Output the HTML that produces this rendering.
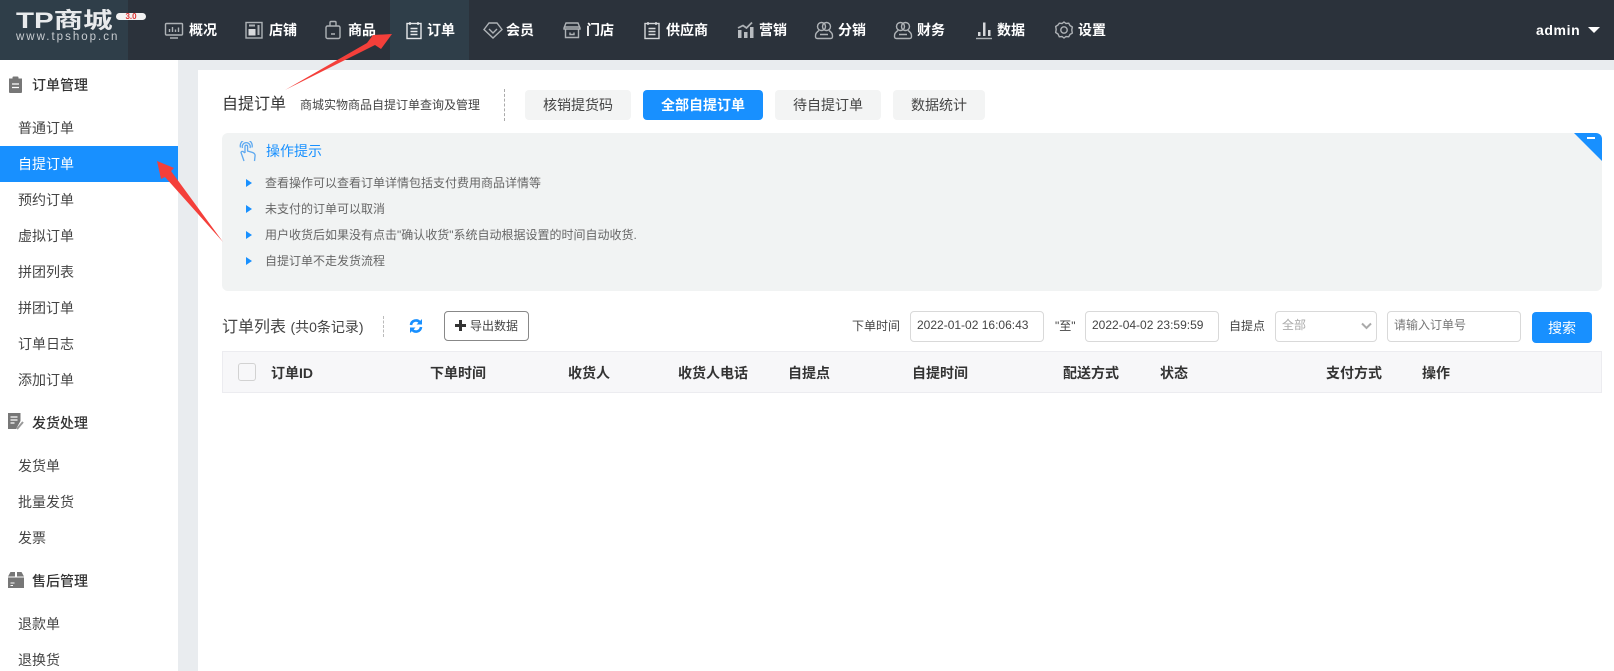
<!DOCTYPE html>
<html lang="zh-CN"><head><meta charset="utf-8"><title>自提订单</title>
<style>
*{box-sizing:border-box}
html,body{margin:0;padding:0;width:1614px;height:671px;overflow:hidden;background:#e9ecef;font-family:"Liberation Sans","Noto Sans CJK SC",sans-serif;color:#333}
.a{position:absolute;white-space:nowrap}
#hd{position:absolute;left:0;top:0;width:1614px;height:60px;background:#2b323b}
.nv{position:absolute;top:19px;height:22px;line-height:22px;font-size:14px;font-weight:700;color:#fff;white-space:nowrap}
.ic{position:absolute;top:20px;width:20px;height:20px;fill:none;stroke:#aeb2b6;stroke-width:1.4}
#sd{position:absolute;left:0;top:60px;width:178px;height:611px;background:#fff}
.si{position:absolute;left:18px;font-size:14px;line-height:20px;color:#444;white-space:nowrap}
.sg{position:absolute;left:32px;font-size:14px;line-height:20px;color:#333;font-weight:500;white-space:nowrap}
#mn{position:absolute;left:198px;top:70px;width:1416px;height:601px;background:#fff}
.tb{position:absolute;top:90px;height:30px;line-height:30px;text-align:center;font-size:14px;background:#f3f4f4;color:#444;border-radius:4px}
.tp{position:absolute;left:265px;font-size:12px;line-height:18px;color:#666;white-space:nowrap}
.tr{position:absolute;left:246px;width:0;height:0;border-left:6px solid #1890ff;border-top:4px solid transparent;border-bottom:4px solid transparent}
.ip{position:absolute;top:311px;height:31px;line-height:27px;border:1px solid #d9d9d9;border-radius:4px;background:#fff;font-size:12px;padding-left:6px;color:#444;white-space:nowrap}
.lb{position:absolute;top:317px;font-size:12px;line-height:18px;color:#444;white-space:nowrap}
.th{position:absolute;top:363px;font-size:14px;line-height:20px;font-weight:700;color:#333;white-space:nowrap}
</style></head><body>
<div id="hd"></div>
<div class="a" style="left:0;top:0;width:128px;height:60px;background:#2f3e49"></div>
<div class="a" style="left:16px;top:9px;font-size:22px;line-height:24px;font-weight:700;color:#e8eaec;transform:scaleX(1.34);transform-origin:0 0">TP商城</div>
<div class="a" style="left:16px;top:31px;font-size:11.5px;line-height:13px;color:#c9cdd1;font-weight:400;letter-spacing:2px">www.tpshop.cn</div>
<div class="a" style="left:116px;top:13px;width:30px;height:7px;border-radius:4px;background:#f2f2f2;color:#d33;font-size:8px;line-height:7px;text-align:center;font-weight:700">3.0</div>
<div class="a" style="left:390px;top:0;width:79px;height:60px;background:#2f3e49"></div>

<svg class="ic" style="left:164px" viewBox="0 0 20 20"><rect x="1.5" y="3.5" width="17" height="11.5" rx="1"/><path d="M6 18h8M5.5 12V9M8.500 12V7M11.500 12V9.500M14.500 12V7.500"/></svg>
<div class="nv" style="left:189px">概况</div>
<svg class="ic" style="left:244px" viewBox="0 0 20 20"><rect x="2" y="2.500" width="16" height="15.500"/><rect x="4.500" y="9" width="7" height="6.500" fill="#d8dadc" stroke="none"/><path d="M5 5.500h6M14.500 5v10" stroke-width="2"/></svg>
<div class="nv" style="left:269px">店铺</div>
<svg class="ic" style="left:323px" viewBox="0 0 20 20"><rect x="3" y="6" width="14" height="12.500" rx="1.500"/><path d="M7 6V2.500q0-1 1-1h4q1 0 1 1V6M8 14h4"/></svg>
<div class="nv" style="left:348px">商品</div>
<svg class="ic" style="left:404px;stroke:#e6e8ea" viewBox="0 0 20 20"><rect x="3" y="3.500" width="14" height="15"/><path d="M6 2v3M14 2v3M6.500 8.500h7M6.500 11.500h7M6.500 14.500h7" /></svg>
<div class="nv" style="left:427px">订单</div>
<svg class="ic" style="left:483px" viewBox="0 0 20 20"><path d="M6 3h8l5 6.500L10 18 1 9.500z"/><path d="M6 9l4 4 4-4"/></svg>
<div class="nv" style="left:506px">会员</div>
<svg class="ic" style="left:562px" viewBox="0 0 20 20"><path d="M4 3h12l2 5v1H2V8zM3.500 9v8.500h13V9"/><path d="M2.500 7h15M8 12.500v2h4v-2"/></svg>
<div class="nv" style="left:586px">门店</div>
<svg class="ic" style="left:642px;stroke:#d5d7da" viewBox="0 0 20 20"><rect x="3" y="3.500" width="14" height="15"/><path d="M6 2v3M14 2v3M6.500 8.500h7M6.500 11.500h7M6.500 14.500h7"/></svg>
<div class="nv" style="left:666px">供应商</div>
<svg class="ic" style="left:736px" viewBox="0 0 20 20"><path d="M2 10h3.500v8H2zM8 12h3.500v6H8zM14 7h3.500v11H14z" fill="#b8bcc0" stroke="none"/><path d="M2 8L7 5.500l3.500 2.500L16 2.500" stroke-width="1.800"/></svg>
<div class="nv" style="left:759px">营销</div>
<svg class="ic" style="left:814px" viewBox="0 0 20 20"><circle cx="7.500" cy="6.500" r="4"/><circle cx="12.500" cy="6.500" r="4"/><path d="M5 10.500C2.500 12 1.300 14 1.500 16.500q0 2 2 2h13q2 0 2-2c.2-2.500-1-4.500-3.500-6M6 14.500h8"/></svg>
<div class="nv" style="left:838px">分销</div>
<svg class="ic" style="left:893px" viewBox="0 0 20 20"><circle cx="7.500" cy="6.500" r="4"/><circle cx="12.500" cy="6.500" r="4"/><path d="M5 10.500C2.500 12 1.300 14 1.500 16.500q0 2 2 2h13q2 0 2-2c.2-2.500-1-4.500-3.500-6M6 14.500h8"/></svg>
<div class="nv" style="left:917px">财务</div>
<svg class="ic" style="left:974px" viewBox="0 0 20 20"><path d="M2 18.500h16" /><path d="M4 12h2.500v4H4zM9 2.500h2.500V16H9zM14 10h2.500v6H14z" fill="#d5d7da" stroke="none"/></svg>
<div class="nv" style="left:997px">数据</div>
<svg class="ic" style="left:1054px" viewBox="0 0 20 20"><path d="M10 2l2 1.500 2.700-.3 1.300 2.300 2.300 1.500-.5 3 .5 3-2.300 1.500-1.300 2.300-2.700-.3-2 1.500-2-1.500-2.700.3L4 14l-2.300-1.500.5-3-.5-3L4 5l1.300-1.800 2.700.3z"/><circle cx="10" cy="10" r="3.200"/></svg>
<div class="nv" style="left:1078px">设置</div>
<div class="a" style="left:1536px;top:19px;font-size:14px;line-height:22px;font-weight:700;color:#fff;letter-spacing:.6px">admin</div>
<div class="a" style="left:1588px;top:27px;border-top:6px solid #fff;border-left:6px solid transparent;border-right:6px solid transparent;width:0;height:0"></div>

<div id="sd"></div>
<svg class="a" style="left:8px;top:76px" width="15" height="17" viewBox="0 0 15 17"><path d="M1 2.500h13V16a1 1 0 0 1-1 1H2a1 1 0 0 1-1-1z" fill="#777"/><rect x="4.500" y="0.500" width="6" height="4" rx="1" fill="#777"/><path d="M4 8h7M4 11.500h7" stroke="#fff" stroke-width="1.200"/></svg>
<div class="sg" style="top:75px">订单管理</div>
<div class="si" style="top:118px">普通订单</div>
<div class="a" style="left:0;top:146px;width:178px;height:36px;background:#1890ff"></div>
<div class="si" style="top:154px;color:#fff">自提订单</div>
<div class="si" style="top:190px">预约订单</div>
<div class="si" style="top:226px">虚拟订单</div>
<div class="si" style="top:262px">拼团列表</div>
<div class="si" style="top:298px">拼团订单</div>
<div class="si" style="top:334px">订单日志</div>
<div class="si" style="top:370px">添加订单</div>
<svg class="a" style="left:8px;top:413px" width="16" height="17" viewBox="0 0 16 17"><path d="M0 0h12.500v8L8 16H0z" fill="#777"/><path d="M2.500 4h7M2.500 7h7M2.500 10h4" stroke="#fff" stroke-width="1.200"/><path d="M9 16l6-7" stroke="#999" stroke-width="2"/></svg>
<div class="sg" style="top:413px">发货处理</div>
<div class="si" style="top:456px">发货单</div>
<div class="si" style="top:492px">批量发货</div>
<div class="si" style="top:528px">发票</div>
<svg class="a" style="left:8px;top:572px" width="16" height="16" viewBox="0 0 16 16"><path d="M2.500 0h11L16 4.500H0z" fill="#777"/><rect x="0" y="5.500" width="16" height="10.500" fill="#777"/><path d="M7 0h2v4.500H7z" fill="#fff"/><path d="M2.500 11h4M2.500 13.500h2.500" stroke="#fff" stroke-width="1"/></svg>
<div class="sg" style="top:571px">售后管理</div>
<div class="si" style="top:614px">退款单</div>
<div class="si" style="top:650px">退换货</div>

<div id="mn"></div>
<div class="a" style="left:222px;top:93px;font-size:16px;line-height:24px;color:#333">自提订单</div>
<div class="a" style="left:300px;top:96px;font-size:12px;line-height:18px;color:#444">商城实物商品自提订单查询及管理</div>
<div class="a" style="left:504px;top:89px;width:0;height:32px;border-left:1px dashed #aaa"></div>
<div class="tb" style="left:525px;width:106px">核销提货码</div>
<div class="tb" style="left:643px;width:120px;background:#1890ff;color:#fff;font-weight:700">全部自提订单</div>
<div class="tb" style="left:775px;width:106px">待自提订单</div>
<div class="tb" style="left:893px;width:92px">数据统计</div>

<div class="a" style="left:222px;top:133px;width:1380px;height:158px;background:#f1f3f3;border-radius:6px;overflow:hidden"><div style="position:absolute;right:0;top:0;width:0;height:0;border-top:28px solid #1890ff;border-left:28px solid transparent"></div><div style="position:absolute;left:1365px;top:4px;width:8px;height:2px;background:#fff"></div></div>
<svg class="a" style="left:239px;top:141px" width="18" height="21" viewBox="0 0 18 21" fill="none" stroke="#5ea9f0" stroke-width="1.300"><path d="M6 12V5.500a1.300 1.300 0 0 1 2.600 0V10l5 1.500q2.500 1 2.500 3l-.6 5.500M6 12l-2-1.500q-1.500-.5-2 1l3 8.500"/><path d="M3.500 7a4 4 0 1 1 7.500 0M1.500 6.500a6 6 0 1 1 11.500 0"/></svg>
<div class="a" style="left:266px;top:141px;font-size:14px;line-height:20px;color:#1890ff">操作提示</div>
<div class="tr" style="top:179px"></div><div class="tp" style="top:174px">查看操作可以查看订单详情包括支付费用商品详情等</div>
<div class="tr" style="top:205px"></div><div class="tp" style="top:200px">未支付的订单可以取消</div>
<div class="tr" style="top:231px"></div><div class="tp" style="top:226px">用户收货后如果没有点击"确认收货"系统自动根据设置的时间自动收货.</div>
<div class="tr" style="top:257px"></div><div class="tp" style="top:252px">自提订单不走发货流程</div>

<div class="a" style="left:222px;top:315px;font-size:16px;line-height:24px;color:#444">订单列表 <span style="font-size:14px">(共0条记录)</span></div>
<div class="a" style="left:383px;top:316px;width:0;height:21px;border-left:1px dashed #bbb"></div>
<svg class="a" style="left:409px;top:319px" width="14" height="14" viewBox="0 0 14 14" fill="none" stroke="#1890ff" stroke-width="2.600"><path d="M2 6a5 5 0 0 1 9-2.500M12 8a5 5 0 0 1-9 2.500"/><path d="M13 0v5.500H7.500M1 14V8.500h5.500" fill="#1890ff" stroke="none"/></svg>
<div class="a" style="left:444px;top:311px;width:85px;height:30px;border:1px solid #888;border-radius:4px"></div>
<svg class="a" style="left:455px;top:320px" width="11" height="11" viewBox="0 0 11 11"><path d="M4 0h3v4h4v3H7v4H4V7H0V4h4z" fill="#333"/></svg>
<div class="a" style="left:470px;top:317px;font-size:12px;line-height:18px;color:#444">导出数据</div>

<div class="lb" style="left:852px">下单时间</div>
<div class="ip" style="left:910px;width:134px">2022-01-02 16:06:43</div>
<div class="lb" style="left:1055px">"至"</div>
<div class="ip" style="left:1085px;width:134px">2022-04-02 23:59:59</div>
<div class="lb" style="left:1229px">自提点</div>
<div class="ip" style="left:1275px;width:102px;color:#aaa">全部</div>
<svg class="a" style="left:1361px;top:322px" width="11" height="8" viewBox="0 0 11 8" fill="none" stroke="#aaa" stroke-width="2"><path d="M1 1.500l4.500 4.500L10 1.500"/></svg>
<div class="ip" style="left:1387px;width:134px;color:#777">请输入订单号</div>
<div class="a" style="left:1532px;top:312px;width:60px;height:31px;line-height:33px;border-radius:4px;background:#1890ff;color:#fff;font-size:14px;text-align:center">搜索</div>

<div class="a" style="left:222px;top:351px;width:1380px;height:42px;background:#f7f7f9;border:1px solid #ececf0"></div>
<div class="a" style="left:238px;top:363px;width:18px;height:18px;border:1px solid #d2d2d2;border-radius:3px;background:#f7f7f9"></div>
<div class="th" style="left:271px">订单ID</div>
<div class="th" style="left:430px">下单时间</div>
<div class="th" style="left:568px">收货人</div>
<div class="th" style="left:678px">收货人电话</div>
<div class="th" style="left:788px">自提点</div>
<div class="th" style="left:912px">自提时间</div>
<div class="th" style="left:1063px">配送方式</div>
<div class="th" style="left:1160px">状态</div>
<div class="th" style="left:1326px">支付方式</div>
<div class="th" style="left:1422px">操作</div>

<svg class="a" style="left:0;top:0" width="1614" height="671" viewBox="0 0 1614 671"><path d="M285 90L367 43 373 35 392 34 381 49 375 45z" fill="#f43f3a"/><path d="M157 161L174 168 171 171 223 242 165 177 161 179z" fill="#f43f3a"/></svg>
</body></html>
